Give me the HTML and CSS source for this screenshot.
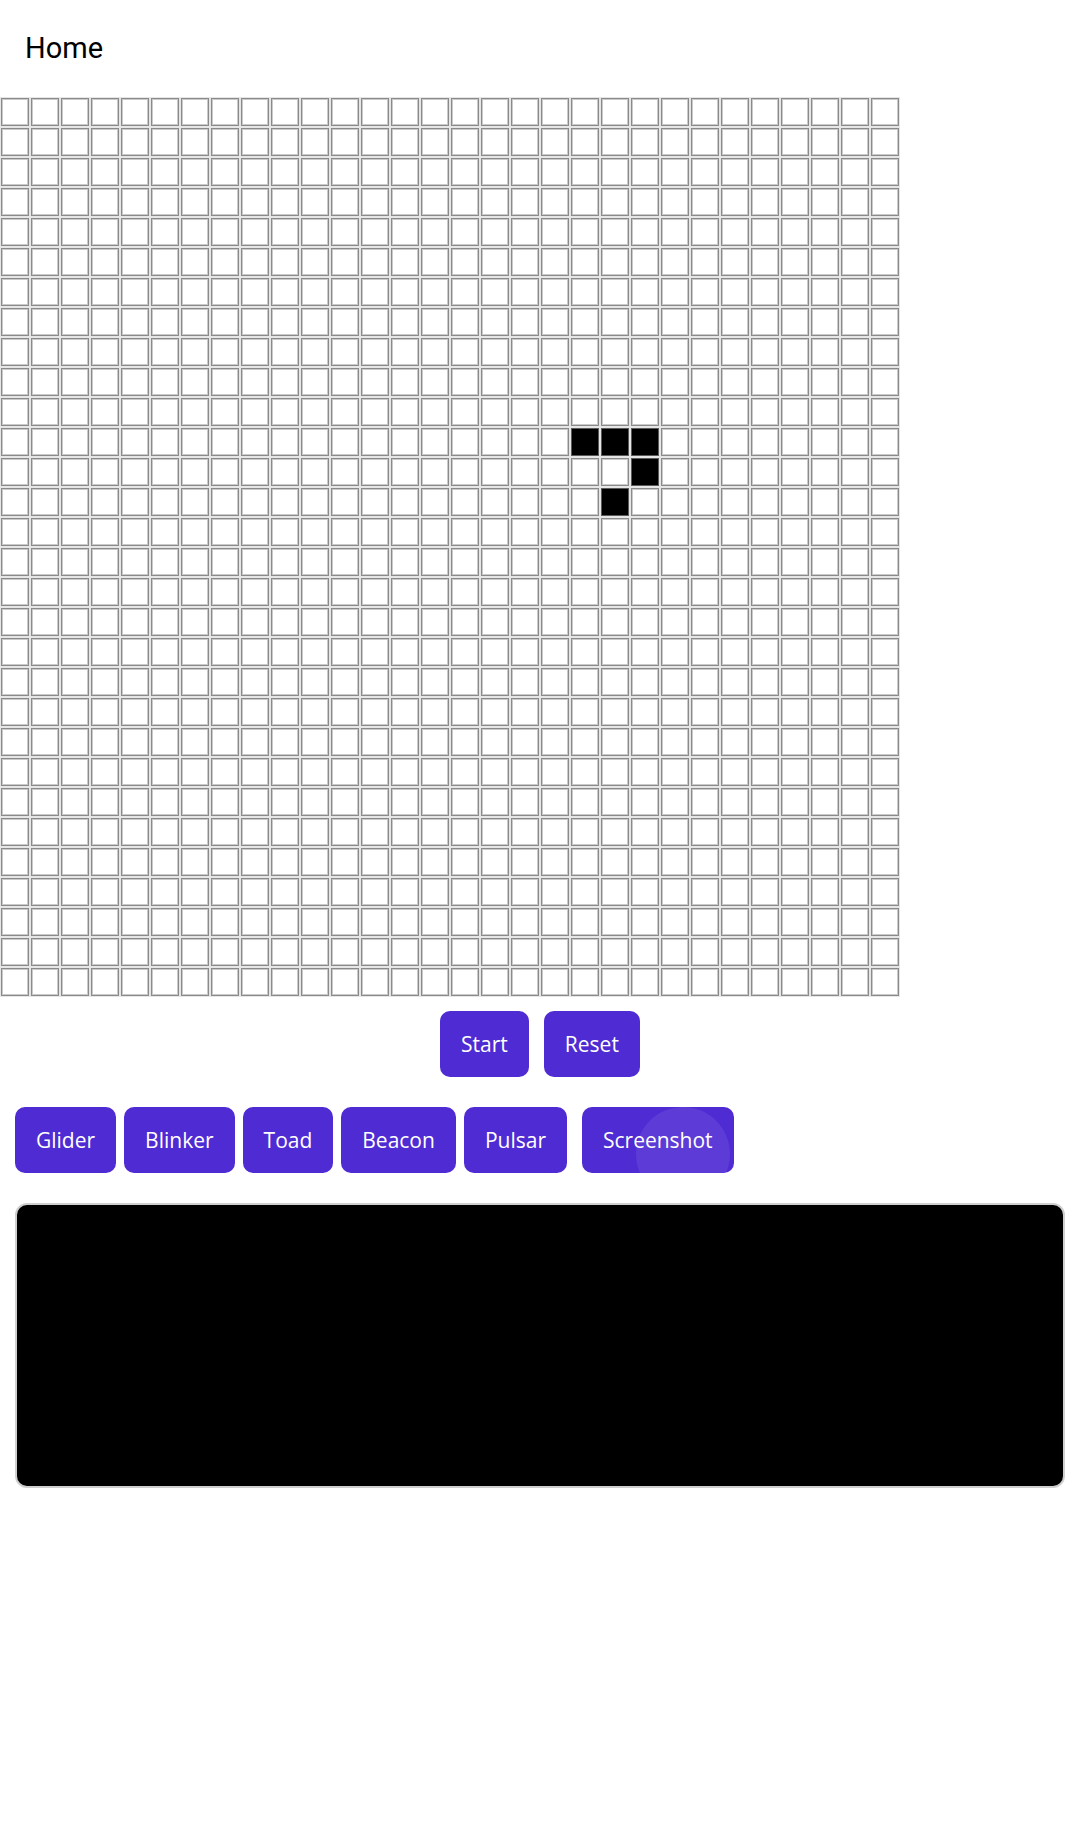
FILE: index.html
```html
<!DOCTYPE html>
<html lang="en">
<head>
<meta charset="utf-8">
<title>Home</title>
<link rel="stylesheet" href="styles.css">
</head>
<body>
<header class="app-header">
  <h1 class="title">Home</h1>
</header>
<main>
  <div class="board" id="board"></div>
  <div class="controls">
    <button class="btn">Start</button>
    <button class="btn">Reset</button>
  </div>
  <div class="patterns">
    <button class="btn">Glider</button>
    <button class="btn">Blinker</button>
    <button class="btn">Toad</button>
    <button class="btn">Beacon</button>
    <button class="btn">Pulsar</button>
    <button class="btn btn-shot">Screenshot<span class="ripple"></span></button>
  </div>
  <div class="screen"></div>
</main>
<script src="script.js"></script>
</body>
</html>
```
FILE: styles.css
```css
* { box-sizing: border-box; }
html, body { margin: 0; padding: 0; background: #ffffff; }
body { font-family: "Open Sans", "Noto Sans", sans-serif; }

.app-header { padding: 31px 0 0 25px; height: 97px; }
.title {
  margin: 0;
  font-family: Roboto, "Noto Sans", sans-serif;
  font-weight: 400;
  font-size: 29px;
  line-height: 34px;
  color: #000;
}

.board {
  width: 900px;
  height: 900px;
  display: grid;
  grid-template-columns: repeat(30, 30px);
  grid-template-rows: repeat(30, 30px);
  background: #e6e6e6;
}
.cell {
  margin: 1px;
  width: 28px;
  height: 28px;
  background: #fff;
  border: 1px solid #8a8a8a;
  box-shadow: inset 0 0 0 1px #cacaca;
}
.cell.alive {
  background: #000;
  border-color: #5a5a5a;
  box-shadow: none;
}

.controls {
  display: flex;
  justify-content: center;
  gap: 15px;
  margin-top: 14px;
}
.btn {
  font-family: "Open Sans", "Noto Sans", sans-serif;
  font-size: 21px;
  line-height: 28px;
  color: #fff;
  background: #4f2bd3;
  border: none;
  border-radius: 10px;
  padding: 19px 21px;
  margin: 0;
}
.patterns {
  display: flex;
  gap: 8px;
  padding-left: 15px;
  margin-top: 30px;
}
.btn-shot {
  position: relative;
  overflow: hidden;
  margin-left: 7px;
}
.ripple {
  position: absolute;
  left: 54px;
  top: 0;
  width: 94px;
  height: 94px;
  border-radius: 50%;
  background: rgba(255, 255, 255, 0.08);
}
.screen {
  margin: 30px 0 0 15px;
  width: 1050px;
  height: 285px;
  background: #000;
  border: 2px solid #cfcfcf;
  border-radius: 12px;
}
```
FILE: script.js
```js
(function () {
  var board = document.getElementById('board');
  var alive = { '11-19': 1, '11-20': 1, '11-21': 1, '12-21': 1, '13-20': 1 };
  for (var r = 0; r < 30; r++) {
    for (var c = 0; c < 30; c++) {
      var d = document.createElement('div');
      d.className = 'cell' + (alive[r + '-' + c] ? ' alive' : '');
      board.appendChild(d);
    }
  }
})();
```
